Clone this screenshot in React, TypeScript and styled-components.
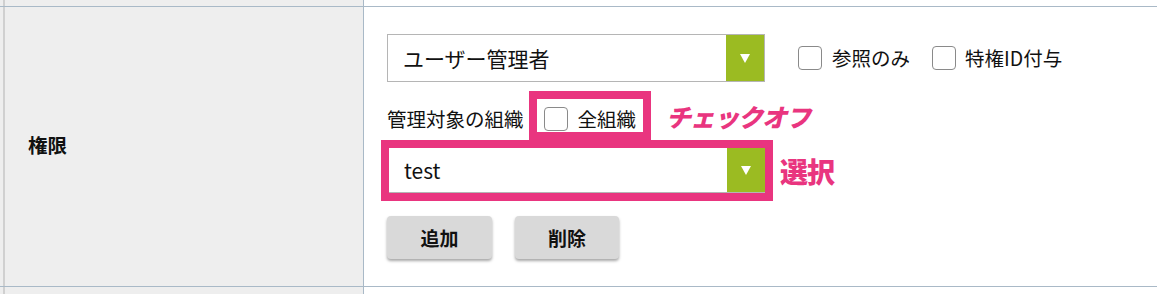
import React from "react";
import styled, { createGlobalStyle } from "styled-components";

const Global = createGlobalStyle`
  html, body { margin: 0; padding: 0; background: #fff; }
  body { font-family: "Noto Sans CJK JP", "Noto Sans", sans-serif; color: #111; }
`;

const LINE = "#a9b9c7";
const PINK = "#e9357f";
const GREEN = "#9bbb22";

const Table = styled.div`
  width: 1157px;
  display: flex;
  flex-direction: column;
`;

const Row = styled.div<{ $h?: number }>`
  display: grid;
  grid-template-columns: 364px 1fr;
  border-bottom: 1px solid ${LINE};
  ${(p) => (p.$h !== undefined ? `height: ${p.$h}px;` : "")}
  &:last-child { border-bottom: none; }
`;

const HeadCell = styled.div`
  background: #eeeeee;
  border-right: 1px solid ${LINE};
  box-shadow: inset 3px 0 0 #eeeeee, inset 5px 0 0 #d0d0d0;
  display: flex;
  align-items: center;
  padding-left: 28px;
  padding-bottom: 4px;
  font-size: 19.5px;
  font-weight: 700;
`;

const BodyCell = styled.div`
  padding: 27px 0 27px 23px;
  display: flex;
  flex-direction: column;
`;

const Line = styled.div`
  display: flex;
  align-items: center;
`;

const Select = styled.div<{ $w: number; $h: number; $plain?: boolean }>`
  box-sizing: border-box;
  width: ${(p) => p.$w}px;
  height: ${(p) => p.$h}px;
  display: flex;
  align-items: stretch;
  background: #fff;
  border: ${(p) => (p.$plain ? "none" : "1px solid #b5b5b5")};
  border-bottom: 1px solid #b5b5b5;
`;

const SelectText = styled.div`
  flex: 1;
  display: flex;
  align-items: center;
  padding-left: 15px;
  font-size: 21px;
`;

const Arrow = styled.div`
  width: 38px;
  background: ${GREEN};
  display: flex;
  align-items: center;
  justify-content: center;
  &::after {
    content: "";
    width: 0;
    height: 0;
    border-left: 5.5px solid transparent;
    border-right: 5.5px solid transparent;
    border-top: 9px solid #fff;
  }
`;

const Checks = styled.div`
  display: flex;
  align-items: center;
  margin-left: 33px;
  gap: 22px;
`;

const CheckLabel = styled.label<{ $gap?: number }>`
  display: flex;
  align-items: center;
  gap: ${(p) => p.$gap ?? 10}px;
  font-size: 19.5px;
  line-height: 24px;
`;

const Box = styled.span`
  box-sizing: border-box;
  width: 24px;
  height: 24px;
  border: 1.5px solid #8a8a8a;
  border-radius: 4px;
  background: #fff;
  flex: none;
`;

const OrgLine = styled.div`
  display: flex;
  align-items: center;
  margin-top: 9px;
`;

const OrgLabel = styled.span`
  font-size: 19.5px;
  padding-top: 6px;
`;

const PinkFrame = styled.div<{ $ml?: number }>`
  box-sizing: border-box;
  border: 8px solid ${PINK};
  margin-left: ${(p) => p.$ml ?? 0}px;
  display: flex;
`;

const OrgFrame = styled(PinkFrame)`
  height: 49px;
  padding: 8px 7px 1px 7px;
  align-items: flex-start;
`;

const Note = styled.span<{ $size: number; $ml: number; $italic?: boolean }>`
  color: ${PINK};
  font-size: ${(p) => p.$size}px;
  font-weight: 900;
  margin-left: ${(p) => p.$ml}px;
  letter-spacing: -1px;
  ${(p) => (p.$italic ? "font-style: italic;" : "")}
`;

const PickLine = styled.div`
  display: flex;
  align-items: center;
  margin-left: -6px;
`;

const Buttons = styled.div`
  display: flex;
  gap: 23px;
  margin-top: 15px;
`;

const Button = styled.button<{ $w: number }>`
  width: ${(p) => p.$w}px;
  height: 43px;
  border: none;
  border-radius: 4px;
  background: #d9d9d9;
  box-shadow: 0 2px 3px rgba(0, 0, 0, 0.35);
  font-family: inherit;
  font-size: 19px;
  font-weight: 700;
  color: #111;
  padding: 0;
`;

export default function App() {
  return (
    <>
      <Global />
      <Table>
        <Row $h={6}>
          <HeadCell />
          <div />
        </Row>
        <Row>
          <HeadCell>権限</HeadCell>
          <BodyCell>
            <Line>
              <Select $w={378} $h={48}>
                <SelectText>ユーザー管理者</SelectText>
                <Arrow />
              </Select>
              <Checks>
                <CheckLabel>
                  <Box />
                  参照のみ
                </CheckLabel>
                <CheckLabel $gap={9}>
                  <Box />
                  特権ID付与
                </CheckLabel>
              </Checks>
            </Line>
            <OrgLine>
              <OrgLabel>管理対象の組織</OrgLabel>
              <OrgFrame $ml={5}>
                <CheckLabel>
                  <Box />
                  全組織
                </CheckLabel>
              </OrgFrame>
              <Note $size={25} $ml={15} $italic>
                チェックオフ
              </Note>
            </OrgLine>
            <PickLine>
              <PinkFrame>
                <Select $w={376} $h={45} $plain>
                  <SelectText>test</SelectText>
                  <Arrow />
                </Select>
              </PinkFrame>
              <Note $size={28} $ml={7}>
                選択
              </Note>
            </PickLine>
            <Buttons>
              <Button $w={105}>追加</Button>
              <Button $w={104}>削除</Button>
            </Buttons>
          </BodyCell>
        </Row>
        <Row $h={7}>
          <HeadCell />
          <div />
        </Row>
      </Table>
    </>
  );
}
